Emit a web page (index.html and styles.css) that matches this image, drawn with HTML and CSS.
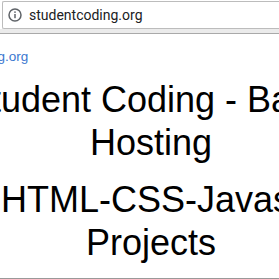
FILE: index.html
```html
<!DOCTYPE html>
<html>
<head>
<meta charset="utf-8">
<link rel="stylesheet" href="styles.css">
</head>
<body>
<div class="toolbar">
  <div class="omnibox">
    <svg class="info" width="14" height="14" viewBox="0 0 14 14">
      <circle cx="7" cy="7" r="6" fill="none" stroke="#5f6368" stroke-width="1.5"/>
      <rect x="6.25" y="6" width="1.5" height="4.2" fill="#5f6368"/>
      <rect x="6.25" y="3.4" width="1.5" height="1.5" fill="#5f6368"/>
    </svg>
    <span class="url">studentcoding.org</span>
  </div>
  <div class="band"></div>
</div>
<div class="viewport">
  <div class="page">
    <a class="site-link" href="#">studentcoding.org</a>
    <h1 class="title">Student Coding - Basic Hosting</h1>
    <h1 class="title title-shift">HTML-CSS-Javascript Projects</h1>
  </div>
</div>
</body>
</html>
```
FILE: styles.css
```css
html, body {
  margin: 0;
  padding: 0;
  background: #ffffff;
  width: 279px;
  height: 279px;
  overflow: hidden;
}
.toolbar {
  padding: 1px 0 0 2px;
  background: #ffffff;
}
.omnibox {
  height: 26px;
  border: 1px solid #bcbcbc;
  border-right: none;
  border-radius: 2px 0 0 2px;
  display: flex;
  align-items: center;
  gap: 7px;
  padding-left: 5px;
  background: #fff;
}
.info {
  flex: none;
}
.url {
  font-family: Roboto, "Liberation Sans", sans-serif;
  font-size: 14px;
  color: #202124;
  white-space: nowrap;
}
.band {
  height: 4px;
  margin-left: -2px;
  background: #ebebeb;
  border-bottom: 1px solid #a9a9a9;
}
.viewport {
  height: 244px;
  overflow: hidden;
  border-bottom: 1px solid #999;
}
.page {
  margin-left: -87px;
  width: 476px;
  padding-top: 15px;
}
.site-link {
  display: block;
  font-family: "Liberation Sans", Arial, sans-serif;
  font-size: 13.5px;
  color: #3b78d0;
  text-decoration: none;
  margin-left: 8px;
}
.title {
  font-family: "Liberation Sans", Arial, sans-serif;
  font-weight: normal;
  font-size: 36px;
  line-height: 43px;
  text-align: center;
  color: #000;
  margin: 14px 0 0 0;
}
.title-shift {
  text-indent: 58px;
}
```
